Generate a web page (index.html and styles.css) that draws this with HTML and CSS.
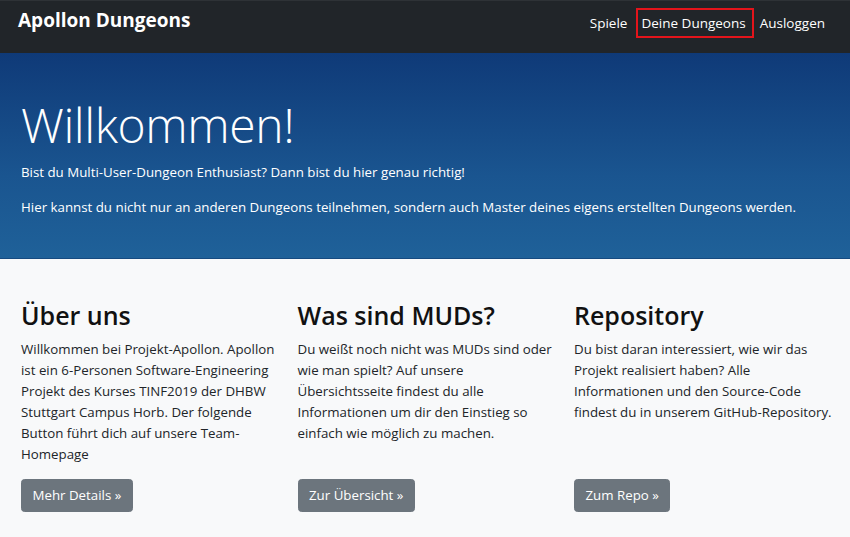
FILE: index.html
```html
<!DOCTYPE html>
<html lang="de">
<head>
<meta charset="utf-8">
<title>Apollon Dungeons</title>
<link rel="stylesheet" href="styles.css">
</head>
<body>
<header class="navbar">
  <a class="brand" href="#">Apollon Dungeons</a>
  <nav class="nav">
    <a class="nav-link" href="#">Spiele</a>
    <a class="nav-link active" href="#">Deine Dungeons</a>
    <a class="nav-link" href="#">Ausloggen</a>
  </nav>
</header>
<section class="hero">
  <h1 class="hero-title">Willkommen!</h1>
  <p>Bist du Multi-User-Dungeon Enthusiast? Dann bist du hier genau richtig!</p>
  <p>Hier kannst du nicht nur an anderen Dungeons teilnehmen, sondern auch Master deines eigens erstellten Dungeons werden.</p>
</section>
<main class="features">
  <div class="col">
    <h2>Über uns</h2>
    <p>Willkommen bei Projekt-Apollon. Apollon ist ein 6-Personen Software-Engineering Projekt des Kurses TINF2019 der DHBW Stuttgart Campus Horb. Der folgende Button führt dich auf unsere Team-Homepage</p>
    <a class="btn" href="#">Mehr Details »</a>
  </div>
  <div class="col">
    <h2>Was sind MUDs?</h2>
    <p>Du weißt noch nicht was MUDs sind oder wie man spielt? Auf unsere Übersichtsseite findest du alle Informationen um dir den Einstieg so einfach wie möglich zu machen.</p>
    <a class="btn" href="#">Zur Übersicht »</a>
  </div>
  <div class="col">
    <h2>Repository</h2>
    <p>Du bist daran interessiert, wie wir das Projekt realisiert haben? Alle Informationen und den Source-Code <span class="nowrap">findest du in unserem GitHub-Repository.</span></p>
    <a class="btn" href="#">Zum Repo »</a>
  </div>
</main>
</body>
</html>
```
FILE: styles.css
```css
* { box-sizing: border-box; }
html, body { height: 100%; }
body {
  margin: 0;
  font-family: "Open Sans", "Noto Sans", sans-serif;
  font-size: 13.3px;
  line-height: 21px;
  color: #212529;
  background: #f8f9fa;
  display: flex;
  flex-direction: column;
}
a { text-decoration: none; }
.nowrap { white-space: nowrap; }
.navbar {
  height: 53px;
  flex: none;
  background: #212529;
  border-top: 1px solid #2e3236;
  display: flex;
  justify-content: space-between;
  align-items: flex-start;
  padding: 0 18px;
}
.brand {
  color: #fff;
  font-weight: 700;
  font-size: 19px;
  line-height: 26px;
  padding-top: 6px;
}
.nav { display: flex; padding-top: 8px; }
.nav-link {
  color: #fff;
  font-size: 13.5px;
  line-height: 24px;
  padding: 2px 7px;
  display: block;
}
.nav-link.active {
  outline: 2px solid #e3141b;
  outline-offset: -1px;
  padding-left: 4px;
  margin-left: 3px;
}
.hero {
  flex: none;
  background: linear-gradient(to bottom, #0f3a78 0%, #1a5590 60%, #1f6199 100%);
  border-bottom: 1px solid #164a80;
  color: #fff;
  padding: 42px 21px 26px;
}
.hero-title {
  margin: 0 0 7px;
  font-weight: 300;
  font-size: 48px;
  line-height: 60px;
  letter-spacing: -0.4px;
}
.hero p { margin: 0 0 14px; }
.features {
  flex: 1;
  display: grid;
  grid-template-columns: repeat(3, 1fr);
  column-gap: 21.5px;
  padding: 39px 21px 26px;
  align-content: start;
}
.col { display: flex; flex-direction: column; min-width: 0; }
.col h2 {
  margin: 0 0 7px;
  font-size: 25px;
  line-height: 34px;
  font-weight: 600;
  color: #111;
}
.col p { margin: 0 0 14px; }
.btn {
  margin-top: auto;
  align-self: flex-start;
  background: #6c757d;
  color: #fff;
  border: 1px solid #6c757d;
  border-radius: 3.5px;
  padding: 5px 10.5px;
  line-height: 21px;
  font-size: 13.3px;
}
```
